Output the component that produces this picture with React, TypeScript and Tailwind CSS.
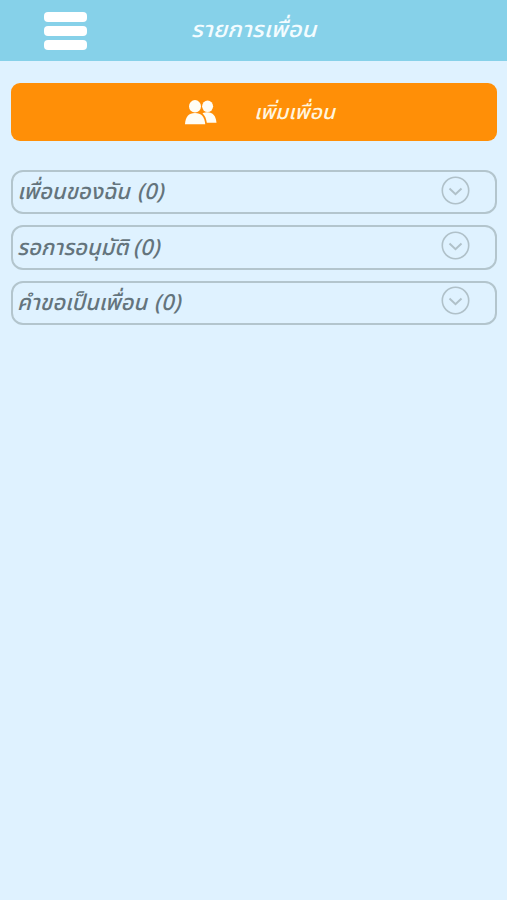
const FONT = "font-['Noto_Sans_Thai','Noto_Sans','Liberation_Sans',sans-serif]";

function FriendsIcon() {
  return (
    <svg width="32" height="25" viewBox="0 0 32 25" fill="#fffdf5" className="shrink-0">
      <ellipse cx="22.6" cy="6.3" rx="5.5" ry="5.800" />
      <path d="M17.5 13.200c2-.8 3.500-1 5-1 5.300 0 8.400 3.500 9 10.500H21.800c-.5-4-1.900-7.200-4.300-9.500Z" />
      <ellipse cx="10" cy="6.300" rx="6.900" ry="6.900" fill="#ff8f07" />
      <ellipse cx="10" cy="6.300" rx="6" ry="6.200" />
      <path d="M0 24.300c.3-7.400 3.800-11.300 10-11.300s9.800 3.900 10.200 11.300Z" />
    </svg>
  );
}

function ChevronCircle() {
  return (
    <svg width="29" height="29" viewBox="0 0 29 29" fill="none" stroke="#b0c1c9" className="mb-[4px] shrink-0">
      <circle cx="14.500" cy="14.500" r="13.200" strokeWidth="1.600" />
      <path d="M8.500 12.500 14.500 18.200l6-5.700" strokeWidth="2" />
    </svg>
  );
}

const sections = [
  { name: "เพื่อนของฉัน", count: 0, width: "w-[113px]" },
  { name: "รอการอนุมัติ", count: 0, width: "w-[109px]" },
  { name: "คำขอเป็นเพื่อน", count: 0, width: "w-[130px]" },
];

export default function App() {
  return (
    <div className={`h-[900px] w-[507px] overflow-hidden bg-[#dff2ff] ${FONT}`}>
      <header className="grid h-[61px] grid-cols-[190px_127px_190px] items-center bg-[#86d1e9]">
        <button aria-label="เมนู" className="ml-11 flex w-[43px] flex-col gap-1">
          <span className="h-[10px] rounded bg-white" />
          <span className="h-[10px] rounded bg-white" />
          <span className="h-[10px] rounded bg-white" />
        </button>
        <h1 className="origin-center scale-x-[1.09] whitespace-nowrap pt-px text-center text-[22px] leading-none font-medium italic text-[#f3fcff]">รายการเพื่อน</h1>
      </header>
      <main className="px-[11px] pt-[22px]">
        <button className="flex h-[58px] w-[486px] items-center rounded-[9px] bg-[#ff8f07] pl-[174px]">
          <FriendsIcon />
          <span className="ml-[37px] origin-left scale-x-[1.06] whitespace-nowrap pt-[2px] text-[20px] leading-none font-medium italic text-[#fff5df]">เพิ่มเพื่อน</span>
        </button>
        <div className="mt-[29px] flex flex-col gap-[11px]">
          {sections.map((s) => (
            <button key={s.name} className="flex h-[44.400px] w-[486px] items-center justify-between rounded-[12px] border-2 border-[#b3c5cd] pr-[25px] pl-[4px]">
              <span className="flex items-center whitespace-nowrap pt-[2px] text-[22px] leading-none font-medium italic text-[#64747c]">
                <span className={s.width}>{s.name}</span>
                <span className="ml-[7px]">({s.count})</span>
              </span>
              <ChevronCircle />
            </button>
          ))}
        </div>
      </main>
    </div>
  );
}
